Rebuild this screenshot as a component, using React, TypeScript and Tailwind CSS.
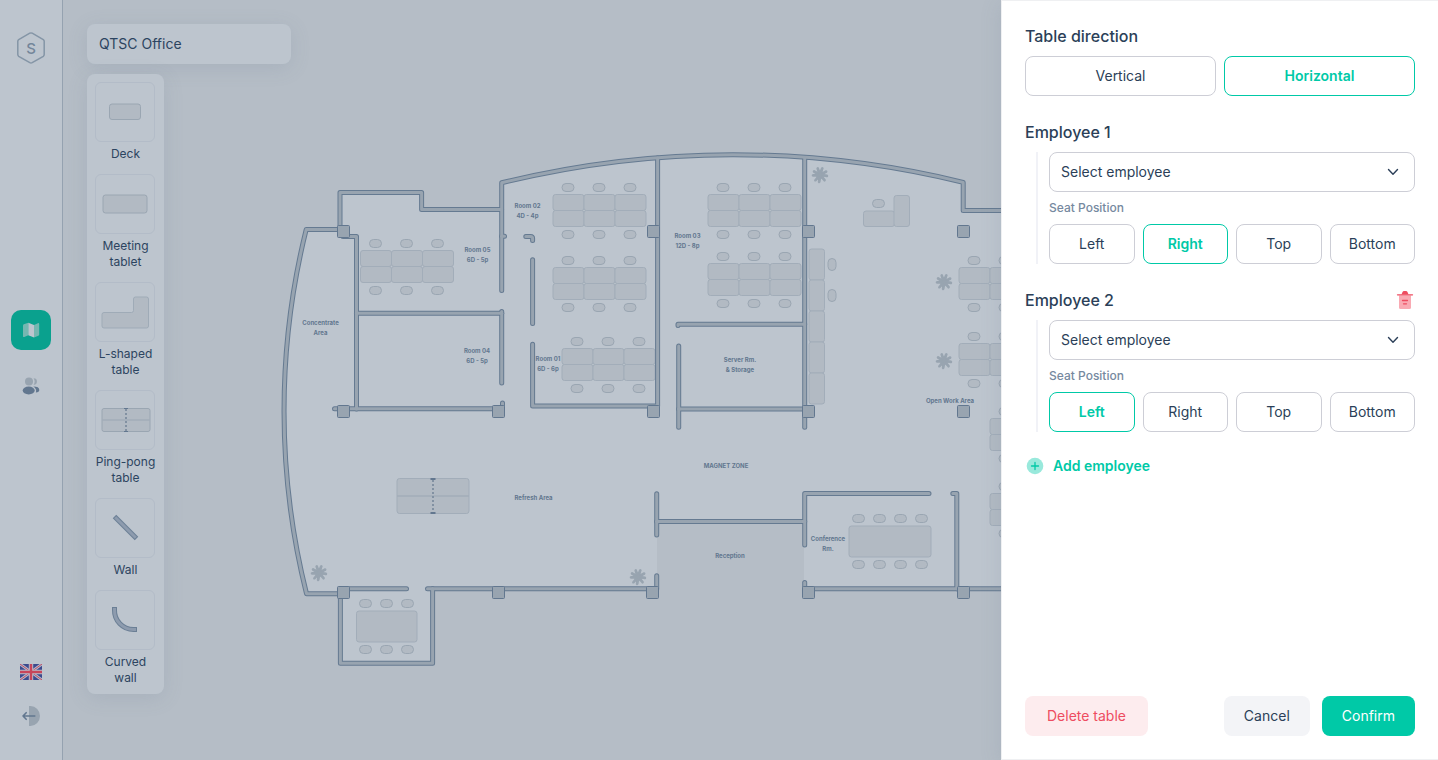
import { useState } from "react";
import type { ReactNode } from "react";
import clsx from "clsx";

type Point = { x: number; y: number };

/* ---------- Floor plan data ---------- */

const WALLS: string[] = [
  "M343 229.5H306.2A754 754 0 0 0 306.5 593.7H343",
  "M340 230V192.4H421.6V209.4H501.6",
  "M501.7 290.5V182.8A967 967 0 0 1 963.2 182.4V210.4H1126V588.7H808",
  "M501.7 236.3H504.5",
  "M343 236.5H356.5V409",
  "M356.5 313.3H501.7",
  "M501.7 311.5V383",
  "M334.5 408.8H498",
  "M502.5 403V409",
  "M525.8 236.4H530.6Q532.6 236.4 532.6 238.4V240.5",
  "M532.6 259.8V323.5",
  "M532.6 344.2V406H657.6V158",
  "M804.7 158V427.2",
  "M678 325.5V324.3H804.7",
  "M678.7 346V427.2",
  "M678.7 409H804.7",
  "M656.7 493.7V535",
  "M656.7 521.6H804.7",
  "M656.7 575.7V589",
  "M804.7 545V493.6H929",
  "M804.7 582.5V589",
  "M952.8 493.6H956.8V588.7",
  "M343 588.7H406.5",
  "M427.5 588.7H652",
  "M340.4 589V663.3H432.6V588.7",
];

const COLUMNS: Point[] = [
  { x: 337.5, y: 225.5 },
  { x: 647.5, y: 225.5 },
  { x: 802.5, y: 225.5 },
  { x: 957.5, y: 225.5 },
  { x: 337.5, y: 405.5 },
  { x: 492.5, y: 405.5 },
  { x: 647.5, y: 405.5 },
  { x: 802.5, y: 405.5 },
  { x: 957.5, y: 405.5 },
  { x: 337.5, y: 586.5 },
  { x: 492.5, y: 586.5 },
  { x: 646.5, y: 586.5 },
  { x: 802.5, y: 586.5 },
  { x: 957.5, y: 586.5 },
];

/* left edge and vertical centre of each block of six desks */
const DESK_BLOCKS: Point[] = [
  { x: 360.5, y: 266.5 },
  { x: 553, y: 210.5 },
  { x: 553, y: 283.5 },
  { x: 562, y: 364.5 },
  { x: 708, y: 210.5 },
  { x: 708, y: 279.5 },
  { x: 959, y: 283.5 },
  { x: 959, y: 359.5 },
  { x: 990, y: 434.5 },
  { x: 990, y: 509.5 },
];

const PLANTS: Point[] = [
  { x: 820, y: 175 },
  { x: 944, y: 282 },
  { x: 944, y: 361 },
  { x: 319, y: 573 },
  { x: 638, y: 577 },
];

const LABELS: (Point & { lines: string[] })[] = [
  { x: 320.5, y: 323, lines: ["Concentrate", "Area"] },
  { x: 477.5, y: 250, lines: ["Room 05", "6D - 5p"] },
  { x: 527.5, y: 206, lines: ["Room 02", "4D - 4p"] },
  { x: 687.5, y: 236, lines: ["Room 03", "12D - 8p"] },
  { x: 477, y: 351, lines: ["Room 04", "6D - 5p"] },
  { x: 548, y: 359, lines: ["Room 01", "6D - 6p"] },
  { x: 740, y: 360, lines: ["Server Rm.", "& Storage"] },
  { x: 950, y: 401, lines: ["Open Work Area"] },
  { x: 726, y: 466, lines: ["MAGNET ZONE"] },
  { x: 533.5, y: 498, lines: ["Refresh Area"] },
  { x: 730, y: 556, lines: ["Reception"] },
  { x: 828, y: 539, lines: ["Conference", "Rm."] },
];

function Desk({ x, y, w = 31, h = 16 }: Point & { w?: number; h?: number }) {
  return <rect x={x} y={y} width={w} height={h} rx="2.5" fill="#b2bac3" stroke="#a2adb9" />;
}

function Chair({ x, y, upright = false }: Point & { upright?: boolean }) {
  const w = upright ? 8 : 12;
  const h = upright ? 12 : 8;
  return <rect x={x - w / 2} y={y - h / 2} width={w} height={h} rx="4" fill="#b2bac3" stroke="#9aa6b2" />;
}

function DeskBlock({ x, y }: Point) {
  return (
    <g>
      {[0, 31, 62].map((dx) => (
        <g key={dx}>
          <Desk x={x + dx} y={y - 16} />
          <Desk x={x + dx} y={y} />
          <Chair x={x + dx + 15} y={y - 23} />
          <Chair x={x + dx + 15} y={y + 24} />
        </g>
      ))}
    </g>
  );
}

function Plant({ x, y }: Point) {
  return (
    <g transform={`translate(${x} ${y})`} fill="#98a4b0">
      <circle r="3.8" />
      {[20, 62, 98, 140, 188, 222, 268, 302, 342].map((angle) => (
        <path key={angle} d="M-1.6 -2L-1.5 -7.2Q-0.8 -8.8 0.6 -8.2Q1.6 -7.4 1.2 -6L1.6 -2Z" transform={`rotate(${angle})`} />
      ))}
    </g>
  );
}

function FloorPlan() {
  return (
    <svg
      className="absolute inset-0 h-full w-full"
      viewBox="63 0 1375 760"
      preserveAspectRatio="xMinYMin slice"
      role="img"
      aria-label="QTSC Office floor plan"
    >
      <path
        fill="#bdc5ce"
        d="M306.2 229.5H340V192.4H421.6V209.4H501.7V182.8A967 967 0 0 1 963.2 182.4V210.4H1126V588.7H804V521.6H657V588.7H432.6V663.3H340.4V593.7H306.5A754 754 0 0 1 306.2 229.5Z"
      />

      {DESK_BLOCKS.map((p) => (
        <DeskBlock key={`${p.x}-${p.y}`} {...p} />
      ))}

      <Desk x={863.5} y={211} w={31} h={15.5} />
      <Desk x={894} y={195.5} w={15.5} h={31} />
      <Chair x={878.5} y={203.5} />

      {[249, 280, 311, 342, 373].map((y) => (
        <Desk key={y} x={809} y={y} w={15.5} h={31} />
      ))}
      <Chair x={832} y={264.5} upright />
      <Chair x={832} y={295.5} upright />

      <Desk x={849} y={526} w={82} h={31} />
      {[858.5, 879.5, 900.5, 921.5].map((x) => (
        <g key={x}>
          <Chair x={x} y={518.5} />
          <Chair x={x} y={564.5} />
        </g>
      ))}

      <Desk x={356.5} y={611} w={60.5} h={31} />
      {[365.5, 386.5, 407.5].map((x) => (
        <g key={x}>
          <Chair x={x} y={603.5} />
          <Chair x={x} y={649.5} />
        </g>
      ))}

      <Desk x={397} y={478.5} w={72} h={35} />
      <path d="M397 496H469" stroke="#a2adb9" strokeWidth="1.5" />
      <path d="M433 480V512" stroke="#8291a2" strokeWidth="2" strokeDasharray="2 2" />
      <path d="M430.5 479H435.5M430.5 513H435.5" stroke="#62778f" strokeWidth="2" />

      {PLANTS.map((p) => (
        <Plant key={`${p.x}-${p.y}`} {...p} />
      ))}

      <g fill="none" strokeLinecap="round" strokeLinejoin="round">
        <g stroke="#657a91" strokeWidth="5">
          {WALLS.map((d) => (
            <path key={d} d={d} />
          ))}
        </g>
        <g stroke="#98a4b0" strokeWidth="3">
          {WALLS.map((d) => (
            <path key={d} d={d} />
          ))}
        </g>
      </g>

      {COLUMNS.map(({ x, y }) => (
        <rect key={`${x}-${y}`} x={x} y={y} width="12" height="12" rx="1" fill="#98a4b0" stroke="#62778f" />
      ))}

      <g fill="#62778f" fontSize="6" fontWeight="700" textAnchor="middle">
        {LABELS.map(({ x, y, lines }) => (
          <text key={lines[0]} x={x} y={y + 2}>
            {lines.map((line, i) => (
              <tspan key={line} x={x} dy={i === 0 ? 0 : 10}>
                {line}
              </tspan>
            ))}
          </text>
        ))}
      </g>
    </svg>
  );
}

/* ---------- Sidebar ---------- */

function Sidebar() {
  return (
    <aside className="flex w-[63px] shrink-0 flex-col items-center justify-between border-r border-[#95a2b0] bg-[#bdc5ce] py-8">
      <a href="#home" aria-label="Home" className="block">
        <svg width="32" height="32" viewBox="0 0 32 32" fill="none">
          <path
            d="M14.8 1.2Q16 0.6 17.2 1.2L28.3 7.6Q29.2 8.2 29.2 9.3V22.6Q29.2 23.7 28.3 24.3L17.2 30.7Q16 31.3 14.8 30.7L3.7 24.3Q2.8 23.7 2.8 22.6V9.3Q2.8 8.2 3.7 7.6Z"
            stroke="#8495a6"
            strokeWidth="1.5"
          />
          <text x="16" y="21.5" textAnchor="middle" fontSize="15" fontWeight="500" fill="#73869a">
            S
          </text>
        </svg>
      </a>

      <nav className="mb-2 flex flex-col gap-4" aria-label="Main">
        <a href="#map" aria-label="Map" className="flex size-10 items-center justify-center rounded-[10px] bg-[#0aa18e]">
          <svg width="20" height="20" viewBox="0 0 20 20">
            <path d="M2 5.6Q2 4.7 2.8 4.3L7.3 2.7V15.3L3.3 17Q2 17.4 2 16.2Z" fill="#75b7b1" />
            <path d="M7.3 2.7L13 4.9V17.4L7.3 15.3Z" fill="#bdc5ce" />
            <path d="M13 4.9L16.9 3.2Q18.2 2.8 18.2 4V14.4Q18.2 15.3 17.4 15.7L13 17.4Z" fill="#75b7b1" />
          </svg>
        </a>
        <a href="#people" aria-label="People" className="flex size-10 items-center justify-center rounded-[10px]">
          <svg width="20" height="20" viewBox="0 0 20 20">
            <circle cx="8" cy="5.6" r="4" fill="#98a4b0" />
            <path d="M12.6 2.3A3.3 3.3 0 1 1 12.6 8.9Q14.7 5.6 12.6 2.3Z" fill="#98a4b0" />
            <ellipse cx="7.7" cy="14.5" rx="6" ry="3.9" fill="#62778f" />
            <path d="M12.3 10.6Q18.3 10.6 18.3 14Q18.3 16.4 14.9 16.6Q16 13.2 12.3 10.6Z" fill="#62778f" />
          </svg>
        </a>
      </nav>

      <div className="flex flex-col items-center gap-5">
        <button type="button" aria-label="Language: English" className="flex size-6 items-center justify-center">
          <svg width="22" height="16" viewBox="0 0 22 16">
            <rect width="22" height="16" fill="#3c4a8d" />
            <path d="M0 0L22 16M22 0L0 16" stroke="#b4b9cb" strokeWidth="2.8" />
            <path d="M0 0L22 16M22 0L0 16" stroke="#c24d62" strokeWidth="1" />
            <path d="M11 0V16M0 8H22" stroke="#b9bccb" strokeWidth="4.4" />
            <path d="M11 0V16M0 8H22" stroke="#c8455a" strokeWidth="2.4" />
          </svg>
        </button>
        <button type="button" aria-label="Log out" className="flex size-6 items-center justify-center">
          <svg width="24" height="24" viewBox="0 0 24 24" fill="none">
            <path d="M10 2H11.5A9.5 10 0 0 1 11.5 22H10Z" fill="#98a4b0" />
            <path d="M15.8 12H4M7.2 8.7L4 12L7.2 15.3" stroke="#62778f" strokeWidth="1.6" strokeLinecap="round" strokeLinejoin="round" />
          </svg>
        </button>
      </div>
    </aside>
  );
}

/* ---------- Shape palette ---------- */

const SHAPES: { label: string; drawing: ReactNode }[] = [
  {
    label: "Deck",
    drawing: <rect x="14.5" y="22" width="31" height="15.5" rx="2.5" fill="#b2bac3" stroke="#9aa6b2" />,
  },
  {
    label: "Meeting tablet",
    drawing: <rect x="8" y="21" width="44" height="18" rx="2.5" fill="#b2bac3" stroke="#9aa6b2" />,
  },
  {
    label: "L-shaped table",
    drawing: (
      <path
        d="M9 30.5H36.5Q38.5 30.5 38.5 28.5V17Q38.5 15 40.5 15H51.5Q53.5 15 53.5 17V44Q53.5 46 51.5 46H9Q7 46 7 44V32.5Q7 30.5 9 30.5Z"
        fill="#b2bac3"
        stroke="#9fabb7"
      />
    ),
  },
  {
    label: "Ping-pong table",
    drawing: (
      <>
        <rect x="7" y="18.5" width="48" height="23" rx="2" fill="#b2bac3" stroke="#9aa6b2" />
        <path d="M7 30H55" stroke="#a2adb9" strokeWidth="1.5" />
        <path d="M31 19V41" stroke="#8291a2" strokeWidth="2" strokeDasharray="2 2" />
        <path d="M29 18.5H33M29 41.5H33" stroke="#62778f" />
      </>
    ),
  },
  {
    label: "Wall",
    drawing: (
      <>
        <path d="M19.5 18.5L41.5 40.5" stroke="#6b7f95" strokeWidth="5" />
        <path d="M20.2 19.2L40.8 39.8" stroke="#8d9bae" strokeWidth="3" />
      </>
    ),
  },
  {
    label: "Curved wall",
    drawing: (
      <>
        <path d="M19.5 17V20A19 19 0 0 0 38.5 39.5H42" stroke="#6b7f95" strokeWidth="5" />
        <path d="M19.5 18V20A19 19 0 0 0 38.5 39.5H41" stroke="#8d9bae" strokeWidth="3" />
      </>
    ),
  },
];

function Palette() {
  return (
    <div className="flex w-[77px] flex-col gap-3 rounded-lg bg-[#bdc5ce] p-2 shadow-[0_4px_20px_rgba(98,119,143,0.16)]">
      {SHAPES.map(({ label, drawing }) => (
        <button key={label} type="button" className="flex w-full flex-col gap-1 text-xs leading-4 text-[#2c4460]">
          <span className="size-[60px] rounded-md border border-[#b3bcc8]">
            <svg width="58" height="58" viewBox="1 1 58 58" fill="none" aria-hidden="true">
              {drawing}
            </svg>
          </span>
          <span className="w-full text-center">{label}</span>
        </button>
      ))}
    </div>
  );
}

/* ---------- Drawer ---------- */

function Choice({ label, active, onSelect }: { label: string; active: boolean; onSelect: () => void }) {
  return (
    <button
      type="button"
      aria-pressed={active}
      onClick={onSelect}
      className={clsx(
        "h-10 rounded-lg border pb-px text-center",
        active ? "border-[#00c9a7] font-semibold text-[#00c9a7]" : "border-[#cdced6]",
      )}
    >
      {label}
    </button>
  );
}

const SEATS = ["Left", "Right", "Top", "Bottom"];

function EmployeeSection({ index, initialSeat, removable = false }: { index: number; initialSeat: string; removable?: boolean }) {
  const [seat, setSeat] = useState(initialSeat);
  const id = `employee-${index}`;
  return (
    <section className="flex flex-col gap-2">
      <div className="flex h-6 items-center justify-between">
        <label htmlFor={id} className="text-base leading-[22px] font-medium">
          Employee {index}
        </label>
        {removable && (
          <button type="button" aria-label={`Remove employee ${index}`} className="flex size-5 items-center justify-center">
            <svg width="20" height="20" viewBox="0 0 20 20" fill="none">
              <path d="M4 5.5H16V17.5Q16 19 14.5 19H5.5Q4 19 4 17.5Z" fill="#f9aab3" />
              <path d="M2.5 4.8H17.5M7.5 10.5H12.5M8.5 13.8H11.5" stroke="#ee4c60" strokeWidth="1.3" strokeLinecap="round" />
              <path d="M6.5 4.5L7.5 2Q8 1 9 1H11Q12 1 12.5 2L13.5 4.5Z" fill="#ee4c60" />
            </svg>
          </button>
        )}
      </div>
      <div className="ml-[11px] flex flex-col gap-2 border-l-2 border-[#f1f2f7] pl-[11px]">
        <div className="grid items-center">
          <select
            id={id}
            className="col-start-1 row-start-1 h-10 w-full appearance-none rounded-lg border border-[#cdced6] bg-white pr-10 pb-px pl-[11px]"
          >
            <option>Select employee</option>
          </select>
          <svg
            className="pointer-events-none col-start-1 row-start-1 mr-3 justify-self-end"
            width="20"
            height="20"
            viewBox="0 0 20 20"
            fill="none"
            aria-hidden="true"
          >
            <path d="M5.5 7.5L10 12.3L14.5 7.5" stroke="#2b3f58" strokeWidth="1.4" strokeLinecap="round" strokeLinejoin="round" />
          </svg>
        </div>
        <p className="text-xs leading-4 font-medium text-[#7689a0]">Seat Position</p>
        <div className="grid grid-cols-4 gap-2">
          {SEATS.map((name) => (
            <Choice key={name} label={name} active={seat === name} onSelect={() => setSeat(name)} />
          ))}
        </div>
      </div>
    </section>
  );
}

function Drawer() {
  const [direction, setDirection] = useState("Horizontal");
  return (
    <aside className="absolute inset-y-0 right-0 flex w-[437px] flex-col justify-between border-y border-l border-[#eff0f2] bg-white p-[23px] shadow-[0_4px_20px_rgba(98,119,143,0.16)]">
      <div className="flex flex-col gap-6">
        <section className="flex flex-col gap-2">
          <div className="flex h-6 items-center">
            <h2 className="text-base leading-[22px] font-medium">Table direction</h2>
          </div>
          <div className="grid grid-cols-2 gap-2">
            {["Vertical", "Horizontal"].map((name) => (
              <Choice key={name} label={name} active={direction === name} onSelect={() => setDirection(name)} />
            ))}
          </div>
        </section>
        <EmployeeSection index={1} initialSeat="Right" />
        <EmployeeSection index={2} initialSeat="Left" removable />
        <button type="button" className="flex items-center gap-2 self-start font-semibold text-[#00c9a7]">
          <svg width="20" height="20" viewBox="0 0 20 20" fill="none" aria-hidden="true">
            <circle cx="10" cy="10" r="8.3" fill="#99e9dc" />
            <path d="M10 6.5V13.5M6.5 10H13.5" stroke="#00c9a7" strokeWidth="1.3" strokeLinecap="round" />
          </svg>
          Add employee
        </button>
      </div>
      <div className="flex items-center gap-3">
        <button type="button" className="mr-auto h-10 rounded-lg bg-[#fdecee] px-[22px] pb-px text-[#ee4c60]">
          Delete table
        </button>
        <button type="button" className="h-10 rounded-lg bg-[#f3f4f7] px-5 pb-px">
          Cancel
        </button>
        <button type="button" className="h-10 rounded-lg bg-[#00c9a7] px-5 pb-px text-white">
          Confirm
        </button>
      </div>
    </aside>
  );
}

export default function App() {
  return (
    <div className="relative flex min-h-screen overflow-hidden bg-[#b5bdc6] font-['Inter',sans-serif] text-sm text-[#2b3f58]">
      <Sidebar />
      <main className="relative flex-1">
        <FloorPlan />
        <div className="relative flex flex-col items-start gap-[10px] p-6">
          <h1 className="h-10 w-[204px] rounded-lg bg-[#bdc5ce] px-3 leading-10 text-[#2c4460] shadow-[0_4px_20px_rgba(98,119,143,0.16)]">
            QTSC Office
          </h1>
          <Palette />
        </div>
      </main>
      <Drawer />
    </div>
  );
}
